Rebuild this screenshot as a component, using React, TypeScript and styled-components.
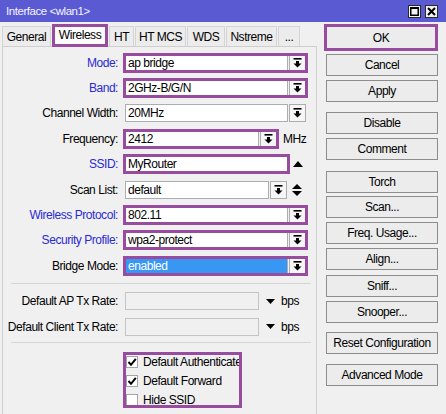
import React from 'react';
import styled, { createGlobalStyle, css } from 'styled-components';

const FONT = `"Liberation Sans", Arial, sans-serif`;
const PURPLE = '#974c9f';
const BLUE = '#2a2ad4';

const GlobalStyle = createGlobalStyle`
  html, body {
    margin: 0;
    padding: 0;
    background: #f0f0f0;
  }
  body {
    font-family: ${FONT};
    font-size: 12px;
    letter-spacing: -0.45px;
    color: #000;
  }
  * {
    box-sizing: border-box;
  }
`;

// Icons
const DropIcon = () => (
  <svg width="9" height="10" viewBox="0 0 9 10">
    <rect x="0.5" y="0" width="8" height="1.6" fill="#000" />
    <path d="M3 3h3v2.5h2.5L4.5 9.5 0.5 5.5H3z" fill="#000" />
  </svg>
);

const UpTri = () => (
  <svg width="10" height="6" viewBox="0 0 10 6">
    <polygon points="0,6 5,0 10,6" fill="#000" />
  </svg>
);

const UpDown = () => (
  <svg width="10" height="12" viewBox="0 0 10 12">
    <polygon points="0,5 5,0 10,5" fill="#000" />
    <polygon points="0,7 10,7 5,12" fill="#000" />
  </svg>
);

const DownTri = () => (
  <svg width="9" height="5" viewBox="0 0 9 5">
    <polygon points="0,0 9,0 4.5,5" fill="#000" />
  </svg>
);

const CheckMark = () => (
  <svg width="10" height="10" viewBox="0 0 10 10">
    <path d="M1.5 5 L4 7.8 L8.8 1.8" stroke="#000" strokeWidth="2" fill="none" />
  </svg>
);

const App = () => {
  return (
    <Window>
      <GlobalStyle />
      <TitleBar>
        <Title>Interface &lt;wlan1&gt;</Title>
        <WinButtons>
          <WinButton>
            <svg width="9" height="9" viewBox="0 0 9 9">
              <rect x="0.75" y="0.75" width="7.5" height="7.5" fill="none" stroke="#000" strokeWidth="1.5" />
              <rect x="0" y="0" width="9" height="2" fill="#000" />
            </svg>
          </WinButton>
          <WinButton>
            <svg width="9" height="9" viewBox="0 0 9 9">
              <path d="M1 1 L8 8 M8 1 L1 8" stroke="#000" strokeWidth="2" />
            </svg>
          </WinButton>
        </WinButtons>
      </TitleBar>

      <Main>
        <LeftPane>
          <Tabs>
            <Tab $w={49}>General</Tab>
            <Tab $w={56} $active>Wireless</Tab>
            <Tab $w={25}>HT</Tab>
            <Tab $w={51}>HT MCS</Tab>
            <Tab $w={38}>WDS</Tab>
            <Tab $w={51}>Nstreme</Tab>
            <Tab $w={22}>...</Tab>
          </Tabs>

          <Panel>
            <Row>
              <Label $blue>Mode:</Label>
              <Combo $w={181} $hl>
                <Input>ap bridge</Input>
                <DropBtn><DropIcon /></DropBtn>
              </Combo>
            </Row>
            <Row>
              <Label $blue>Band:</Label>
              <Combo $w={181} $hl>
                <Input>2GHz-B/G/N</Input>
                <DropBtn><DropIcon /></DropBtn>
              </Combo>
            </Row>
            <Row>
              <Label>Channel Width:</Label>
              <Combo $w={181}>
                <Input>20MHz</Input>
                <DropBtn><DropIcon /></DropBtn>
              </Combo>
            </Row>
            <Row>
              <Label>Frequency:</Label>
              <FieldLine>
                <Combo $w={152} $hl>
                  <Input>2412</Input>
                  <DropBtn><DropIcon /></DropBtn>
                </Combo>
                <Unit>MHz</Unit>
              </FieldLine>
            </Row>
            <Row>
              <Label $blue>SSID:</Label>
              <FieldLine>
                <Combo $w={163} $hl>
                  <Input>MyRouter</Input>
                </Combo>
                <SideIcon><UpTri /></SideIcon>
              </FieldLine>
            </Row>
            <Row>
              <Label>Scan List:</Label>
              <FieldLine>
                <Combo $w={162}>
                  <Input>default</Input>
                  <DropBtn><DropIcon /></DropBtn>
                </Combo>
                <SideIcon><UpDown /></SideIcon>
              </FieldLine>
            </Row>
            <Row>
              <Label $blue>Wireless Protocol:</Label>
              <Combo $w={181} $hl>
                <Input>802.11</Input>
                <DropBtn><DropIcon /></DropBtn>
              </Combo>
            </Row>
            <Row>
              <Label $blue>Security Profile:</Label>
              <Combo $w={181} $hl>
                <Input>wpa2-protect</Input>
                <DropBtn><DropIcon /></DropBtn>
              </Combo>
            </Row>
            <Row>
              <Label>Bridge Mode:</Label>
              <Combo $w={181} $hl>
                <Input $selected>enabled</Input>
                <DropBtn><DropIcon /></DropBtn>
              </Combo>
            </Row>

            <Separator />

            <Row>
              <Label>Default AP Tx Rate:</Label>
              <FieldLine>
                <Combo $w={134}>
                  <Input $disabled />
                </Combo>
                <RateArrow><DownTri /></RateArrow>
                <Unit>bps</Unit>
              </FieldLine>
            </Row>
            <Row>
              <Label>Default Client Tx Rate:</Label>
              <FieldLine>
                <Combo $w={134}>
                  <Input $disabled />
                </Combo>
                <RateArrow><DownTri /></RateArrow>
                <Unit>bps</Unit>
              </FieldLine>
            </Row>

            <Separator $top={3} />

            <CheckGroup>
              <CheckRow>
                <CheckBox><CheckMark /></CheckBox>
                Default Authenticate
              </CheckRow>
              <CheckRow>
                <CheckBox><CheckMark /></CheckBox>
                Default Forward
              </CheckRow>
              <CheckRow>
                <CheckBox />
                Hide SSID
              </CheckRow>
            </CheckGroup>
          </Panel>
        </LeftPane>

        <RightPane>
          <Button $hl>OK</Button>
          <Button $mt={3}>Cancel</Button>
          <Button $mt={4}>Apply</Button>
          <Button $mt={10}>Disable</Button>
          <Button $mt={4}>Comment</Button>
          <Button $mt={11}>Torch</Button>
          <Button $mt={3}>Scan...</Button>
          <Button $mt={4}>Freq. Usage...</Button>
          <Button $mt={4}>Align...</Button>
          <Button $mt={5}>Sniff...</Button>
          <Button $mt={4}>Snooper...</Button>
          <Button $mt={9}>Reset Configuration</Button>
          <Button $mt={10}>Advanced Mode</Button>
        </RightPane>
      </Main>
    </Window>
  );
};

// Styled Components
const Window = styled.div`
  width: 446px;
  height: 414px;
  overflow: hidden;
  background: #f0f0f0;
  display: flex;
  flex-direction: column;
`;

const TitleBar = styled.div`
  height: 22px;
  flex: none;
  background: #5a5ad2;
  color: #f4f4ff;
  display: flex;
  align-items: center;
  padding: 0 8px 0 6px;
  font-size: 11.5px;
`;

const Title = styled.div`
  flex: 1;
`;

const WinButtons = styled.div`
  display: flex;
  gap: 4px;
`;

const WinButton = styled.div`
  width: 13px;
  height: 13px;
  background: #f2f2f2;
  border: 1px solid #2a2a2a;
  display: flex;
  align-items: center;
  justify-content: center;
`;

const Main = styled.div`
  flex: 1;
  min-height: 0;
  display: flex;
  gap: 7px;
  padding: 2px 8px 0 2px;
`;

const LeftPane = styled.div`
  width: 315px;
  display: flex;
  flex-direction: column;
`;

const Tabs = styled.div`
  height: 22px;
  display: flex;
  align-items: flex-end;
  gap: 1px;
`;

const Tab = styled.div<{ $w: number; $active?: boolean }>`
  width: ${(p) => p.$w}px;
  height: 20px;
  border: 1px solid #d4d4d4;
  border-bottom: none;
  background: #ececec;
  display: flex;
  align-items: center;
  justify-content: center;
  white-space: nowrap;
  ${(p) =>
    p.$active &&
    css`
      position: relative;
      z-index: 1;
      height: 23px;
      margin-bottom: -1px;
      border: 3px solid ${PURPLE};
      background: #fbfbfb;
      padding-bottom: 2px;
    `}
`;

const Panel = styled.div`
  flex: 1;
  border: 1px solid #cfcfcf;
  border-bottom: none;
  padding-top: 3px;
  display: flex;
  flex-direction: column;
`;

const Row = styled.div`
  height: 25.4px;
  display: grid;
  grid-template-columns: 115px auto;
  column-gap: 7px;
  align-items: center;
`;

const Label = styled.div<{ $blue?: boolean }>`
  text-align: right;
  white-space: nowrap;
  color: ${(p) => (p.$blue ? BLUE : '#000')};
`;

const FieldLine = styled.div`
  display: flex;
  align-items: center;
`;

const Combo = styled.div<{ $w: number; $hl?: boolean }>`
  position: relative;
  width: ${(p) => p.$w}px;
  height: 18px;
  display: flex;
  gap: 1px;
  ${(p) =>
    p.$hl &&
    css`
      &::after {
        content: '';
        position: absolute;
        inset: -1px -2px;
        border: 3px solid ${PURPLE};
        pointer-events: none;
      }
    `}
`;

const Input = styled.div<{ $selected?: boolean; $disabled?: boolean }>`
  flex: 1;
  height: 18px;
  border: 1px solid #abadb3;
  background: ${(p) => (p.$selected ? '#3797f2' : p.$disabled ? '#f0f0f0' : '#fff')};
  color: ${(p) => (p.$selected ? '#fff' : '#000')};
  border-color: ${(p) => (p.$disabled ? '#c4c4c4' : '#abadb3')};
  padding: 0 2px;
  line-height: 16px;
  white-space: nowrap;
  overflow: hidden;
`;

const DropBtn = styled.div`
  width: 17px;
  height: 18px;
  border: 1px solid #adadad;
  background: #f6f6f6;
  display: flex;
  align-items: center;
  justify-content: center;
`;

const Unit = styled.span`
  margin-left: 6px;
`;

const SideIcon = styled.span`
  display: flex;
  align-items: center;
  margin-left: 5px;
`;

const RateArrow = styled.span`
  display: flex;
  align-items: center;
  margin-left: 7px;
`;

const Separator = styled.div<{ $top?: number }>`
  height: 1px;
  flex: none;
  background: #d5d5d5;
  margin: ${(p) => p.$top ?? 4}px 5px 5px 8px;
`;

const CheckGroup = styled.div`
  position: relative;
  margin-left: 120px;
  margin-top: 4px;
  width: 119px;
  padding-left: 3px;
  &::after {
    content: '';
    position: absolute;
    inset: 0 0 1px 0;
    border: 3px solid ${PURPLE};
    pointer-events: none;
  }
`;

const CheckRow = styled.div`
  height: 19px;
  display: flex;
  align-items: center;
  gap: 5px;
  white-space: nowrap;
`;

const CheckBox = styled.span`
  width: 12px;
  height: 12px;
  background: #fff;
  border: 1px solid #a5a5a5;
  display: flex;
  align-items: center;
  justify-content: center;
`;

const RightPane = styled.div`
  width: 114px;
  display: flex;
  flex-direction: column;
`;

const Button = styled.div<{ $mt?: number; $hl?: boolean }>`
  height: 22px;
  margin-top: ${(p) => p.$mt ?? 0}px;
  margin-left: 2px;
  border: 1px solid #8d8d8d;
  background: #ececec;
  display: flex;
  align-items: center;
  justify-content: center;
  white-space: nowrap;
  ${(p) =>
    p.$hl &&
    css`
      height: 27px;
      margin-left: 0;
      border: 3px solid ${PURPLE};
    `}
`;

export default App;
